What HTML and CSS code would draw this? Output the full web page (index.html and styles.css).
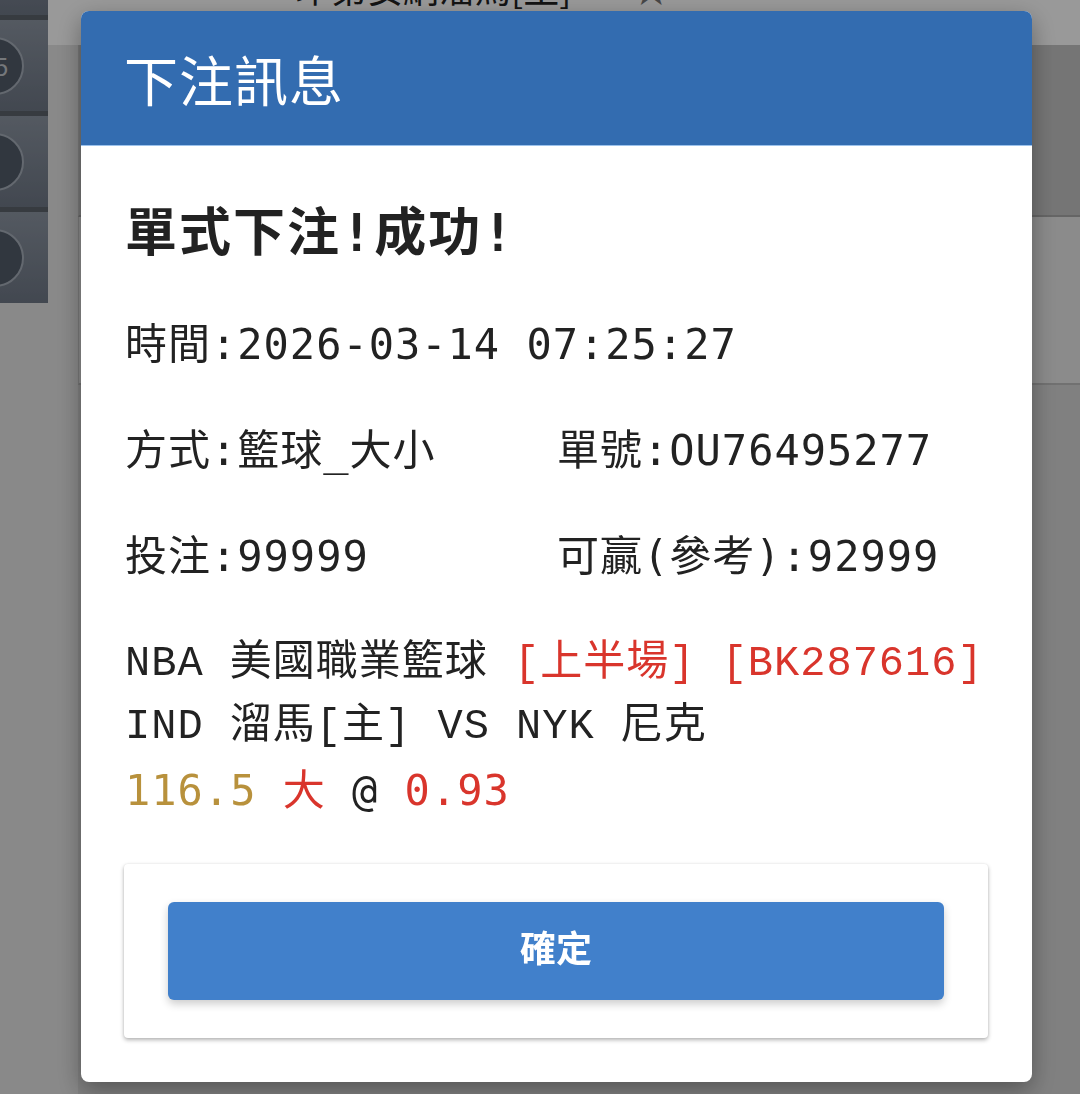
FILE: index.html
```html
<!DOCTYPE html>
<html lang="zh-Hant">
<head>
    <meta charset="UTF-8">
    <meta name="viewport" content="width=device-width, initial-scale=1.0">
    <title>下注訊息</title>
    <link rel="stylesheet" href="styles.css">
</head>
<body>

    <!-- 背景頁面 (被遮罩蓋住) -->
    <div class="page">
        <aside class="side">
            <div class="side-btn"><span class="ball"></span></div>
            <div class="side-btn"><span class="ball">15</span></div>
            <div class="side-btn"><span class="ball"></span></div>
            <div class="side-btn"><span class="ball"></span></div>
        </aside>
        <main class="list">
            <div class="row-top">
                <span class="team">印第安納溜馬[主]</span>
                <span class="star">★</span>
            </div>
            <div class="row row-dark"></div>
            <div class="row row-light"></div>
            <div class="row-rest"></div>
        </main>
    </div>

    <!-- 下注訊息視窗 -->
    <div class="overlay">
        <div class="modal">
            <div class="modal-head">下注訊息</div>
            <div class="modal-body">
                <h2 class="result">單式下注!成功!</h2>
                <p class="info info-time">時間:2026-03-14 07:25:27</p>
                <div class="info-grid">
                    <p class="info">方式:籃球_大小</p>
                    <p class="info">單號:OU76495277</p>
                    <p class="info">投注:99999</p>
                    <p class="info">可贏(參考):92999</p>
                </div>
                <div class="match">
                    <p class="match-line">NBA 美國職業籃球 <span class="red">[上半場] [BK287616]</span></p>
                    <p class="match-line">IND 溜馬[主] VS NYK 尼克</p>
                    <p class="odds"><span class="gold">116.5</span> <span class="red">大</span> @ <span class="red">0.93</span></p>
                </div>
                <div class="actions">
                    <button class="ok">確定</button>
                </div>
            </div>
        </div>
    </div>

</body>
</html>
```

FILE: styles.css
```css
* {
    margin: 0;
    padding: 0;
    box-sizing: border-box;
}

body {
    font-family: "Noto Sans CJK TC", "Noto Sans", sans-serif;
    background-color: #e4e4e4;
    color: #222;
    height: 1094px;
    overflow: hidden;
}

/* ---- 背景頁面 ---- */
.page {
    display: flex;
    height: 100%;
}

.side {
    width: 48px;
    margin-top: -76px;
    display: flex;
    flex-direction: column;
    gap: 5px;
    align-self: flex-start;
    background-color: #5d636b;
}

.side-btn {
    height: 91px;
    display: flex;
    align-items: center;
    overflow: hidden;
    background: linear-gradient(#8c95a2, #6f7886);
}

.ball {
    width: 58px;
    height: 58px;
    margin-left: -34px;
    flex-shrink: 0;
    border-radius: 50%;
    background-color: #525c6a;
    border: 2px solid #a6aeb9;
    color: #c4c8ce;
    font-size: 24px;
    display: flex;
    align-items: center;
    justify-content: center;
}

.list {
    flex: 1;
    display: flex;
    flex-direction: column;
}

.row-top {
    height: 78px;
    margin-top: -33px;
    padding-left: 247px;
    background-color: #fff;
    display: flex;
    gap: 62px;
    font-size: 36px;
    line-height: 40px;
}

.star {
    color: #777;
}

.row {
    margin-left: 30px;
    border-left: 1px solid #c8c8c8;
}

.row-dark {
    height: 172px;
    background-color: #c4c4c4;
    border-bottom: 2px solid #a9a9a9;
}

.row-light {
    height: 168px;
    background-color: #e8e8e8;
    border-bottom: 2px solid #bdbdbd;
}

.row-rest {
    flex: 1;
    margin-left: 30px;
    background-color: #d6d6d6;
}

/* ---- 遮罩 + 視窗 ---- */
.overlay {
    position: fixed;
    top: 0;
    left: 0;
    right: 0;
    bottom: 0;
    background-color: rgba(0, 0, 0, 0.4);
    padding: 11px 48px 0 81px;
}

.modal {
    width: 951px;
    height: 1071px;
    background-color: #fff;
    border-radius: 8px;
    box-shadow: 0 8px 24px rgba(0, 0, 0, 0.35);
    overflow: hidden;
}

.modal-head {
    height: 135px;
    padding: 0 43px;
    background-color: #336cb0;
    border-bottom: 1px solid #9cc2ec;
    color: #fff;
    font-size: 54px;
    line-height: 136px;
    letter-spacing: 1px;
}

.modal-body {
    padding: 34px 44px 0 43px;
}

.result {
    font-family: "DejaVu Sans Mono", "Noto Sans CJK TC", monospace;
    font-size: 52px;
    font-weight: bold;
    line-height: 106px;
    letter-spacing: 2px;
    padding-left: 1px;
    color: #222;
}

.info {
    font-family: "DejaVu Sans Mono", "Noto Sans CJK TC", monospace;
    font-size: 42px;
    letter-spacing: 1px;
    line-height: 106px;
    padding-left: 1px;
    white-space: nowrap;
}

.info-time {
    margin-top: 6px;
}

.info-grid {
    display: grid;
    grid-template-columns: 1fr 1fr;
}

.match {
    margin-top: 23px;
    padding-left: 1px;
    font-size: 42px;
    letter-spacing: 1px;
    line-height: 63px;
    white-space: nowrap;
}

.match-line {
    font-family: "Liberation Mono", "Noto Sans CJK TC", monospace;
}

.odds {
    font-family: "DejaVu Sans Mono", "Noto Sans CJK TC", monospace;
}

.red {
    color: #d9352c;
}

.gold {
    color: #b8913c;
}

.actions {
    margin-top: 42px;
    padding: 38px 44px;
    background-color: #fff;
    border-radius: 4px;
    box-shadow: 0 2px 4px rgba(0, 0, 0, 0.3), 0 0 2px rgba(0, 0, 0, 0.08);
}

.ok {
    display: block;
    width: 100%;
    height: 98px;
    padding-bottom: 10px;
    border: none;
    border-radius: 6px;
    background-color: #4180cb;
    color: #fff;
    font-family: "Noto Sans CJK TC", sans-serif;
    font-size: 36px;
    font-weight: bold;
    box-shadow: 0 4px 8px rgba(0, 0, 0, 0.2);
    cursor: pointer;
}
```
